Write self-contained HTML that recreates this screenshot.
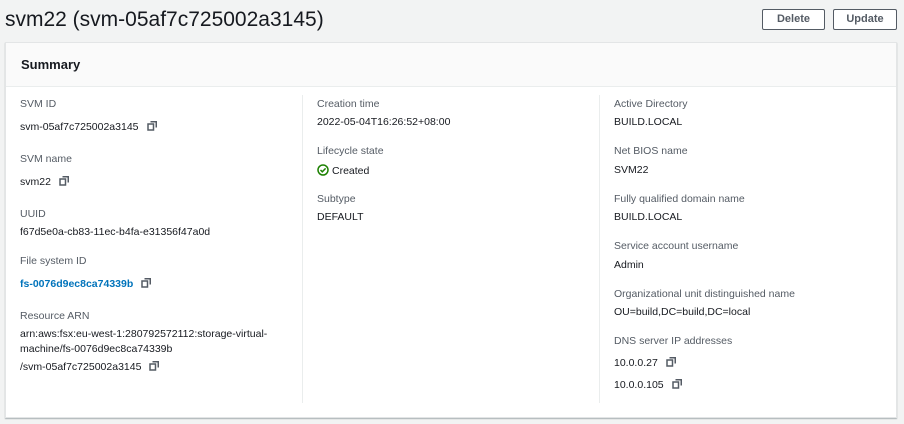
<!DOCTYPE html>
<html><head><style>
body{margin:0;width:904px;height:424px;background:#f2f3f3;font-family:"Liberation Sans",Arial,sans-serif;position:relative;overflow:hidden}
.a{position:absolute;white-space:nowrap}
h1{position:absolute;left:5px;top:8px;margin:0;font-size:21px;font-weight:normal;color:#16191f}
.btn{position:absolute;top:9px;height:19px;border:1px solid #545b64;border-radius:2px;background:#fff;font-size:11px;font-weight:bold;color:#545b64;text-align:center;line-height:19px}
.card{position:absolute;left:5px;top:42px;width:890px;height:374px;background:#fff;border:1px solid #e3e5e6;box-shadow:0 1px 1px rgba(0,28,36,.3)}
.hd{position:absolute;left:0;top:0;right:0;height:43px;background:#fafafa;border-bottom:1px solid #eaeded}
.hd span{position:absolute;left:15px;top:14px;font-size:13px;font-weight:bold;color:#16191f}
.l{font-size:10.5px;color:#545b64}
.v{font-size:10.5px;color:#16191f}
.dv{position:absolute;top:95px;height:308px;width:1px;background:#eaeded}
.cp{display:inline-block;vertical-align:-1px;margin-left:8px}
</style></head><body>
<h1>svm22 (svm-05af7c725002a3145)</h1>
<div class="btn" style="left:762px;width:61px">Delete</div>
<div class="btn" style="left:833px;width:62px">Update</div>
<div class="card"><div class="hd"><span>Summary</span></div></div>
<div class="dv" style="left:302px"></div>
<div class="dv" style="left:599px"></div>
<svg width="0" height="0" style="position:absolute"><defs><symbol id="c" viewBox="0 0 10 10"><path d="M3.5 0.75H9.25V6.5" fill="none" stroke="#545b64" stroke-width="1.5"/><rect x="1" y="3" width="5.5" height="6" fill="none" stroke="#545b64" stroke-width="1.5"/></symbol></defs></svg>

<div class="a l" style="left:20px;top:98px">SVM ID</div>
<div class="a v" style="left:20px;top:121px">svm-05af7c725002a3145<svg class="cp" width="10" height="10"><use href="#c"/></svg></div>
<div class="a l" style="left:20px;top:153px">SVM name</div>
<div class="a v" style="left:20px;top:176px">svm22<svg class="cp" width="10" height="10"><use href="#c"/></svg></div>
<div class="a l" style="left:20px;top:208px">UUID</div>
<div class="a v" style="left:20px;top:226px">f67d5e0a-cb83-11ec-b4fa-e31356f47a0d</div>
<div class="a l" style="left:20px;top:255px">File system ID</div>
<div class="a v" style="left:20px;top:278px;color:#0073bb;font-weight:bold">fs-0076d9ec8ca74339b<svg class="cp" width="10" height="10"><use href="#c"/></svg></div>
<div class="a l" style="left:20px;top:310px">Resource ARN</div>
<div class="a v" style="left:20px;top:328px">arn:aws:fsx:eu-west-1:280792572112:storage-virtual-</div>
<div class="a v" style="left:20px;top:343px">machine/fs-0076d9ec8ca74339b</div>
<div class="a v" style="left:20px;top:361px">/svm-05af7c725002a3145<svg class="cp" width="10" height="10"><use href="#c"/></svg></div>

<div class="a l" style="left:317px;top:98px">Creation time</div>
<div class="a v" style="left:317px;top:116px">2022-05-04T16:26:52+08:00</div>
<div class="a l" style="left:317px;top:145px">Lifecycle state</div>
<div class="a v" style="left:317px;top:164px"><svg width="12" height="12" viewBox="0 0 12 12" style="vertical-align:-2px;margin-right:3px"><circle cx="6" cy="6" r="5" fill="none" stroke="#1d8102" stroke-width="1.5"/><path d="M3.5 6l1.8 1.8L8.6 4.4" fill="none" stroke="#1d8102" stroke-width="1.5"/></svg>Created</div>
<div class="a l" style="left:317px;top:193px">Subtype</div>
<div class="a v" style="left:317px;top:211px">DEFAULT</div>

<div class="a l" style="left:614px;top:98px">Active Directory</div>
<div class="a v" style="left:614px;top:116px">BUILD.LOCAL</div>
<div class="a l" style="left:614px;top:145px">Net BIOS name</div>
<div class="a v" style="left:614px;top:164px">SVM22</div>
<div class="a l" style="left:614px;top:193px">Fully qualified domain name</div>
<div class="a v" style="left:614px;top:211px">BUILD.LOCAL</div>
<div class="a l" style="left:614px;top:240px">Service account username</div>
<div class="a v" style="left:614px;top:259px">Admin</div>
<div class="a l" style="left:614px;top:288px">Organizational unit distinguished name</div>
<div class="a v" style="left:614px;top:306px">OU=build,DC=build,DC=local</div>
<div class="a l" style="left:614px;top:335px">DNS server IP addresses</div>
<div class="a v" style="left:614px;top:357px">10.0.0.27<svg class="cp" width="10" height="10"><use href="#c"/></svg></div>
<div class="a v" style="left:614px;top:379px">10.0.0.105<svg class="cp" width="10" height="10"><use href="#c"/></svg></div>
</body></html>
